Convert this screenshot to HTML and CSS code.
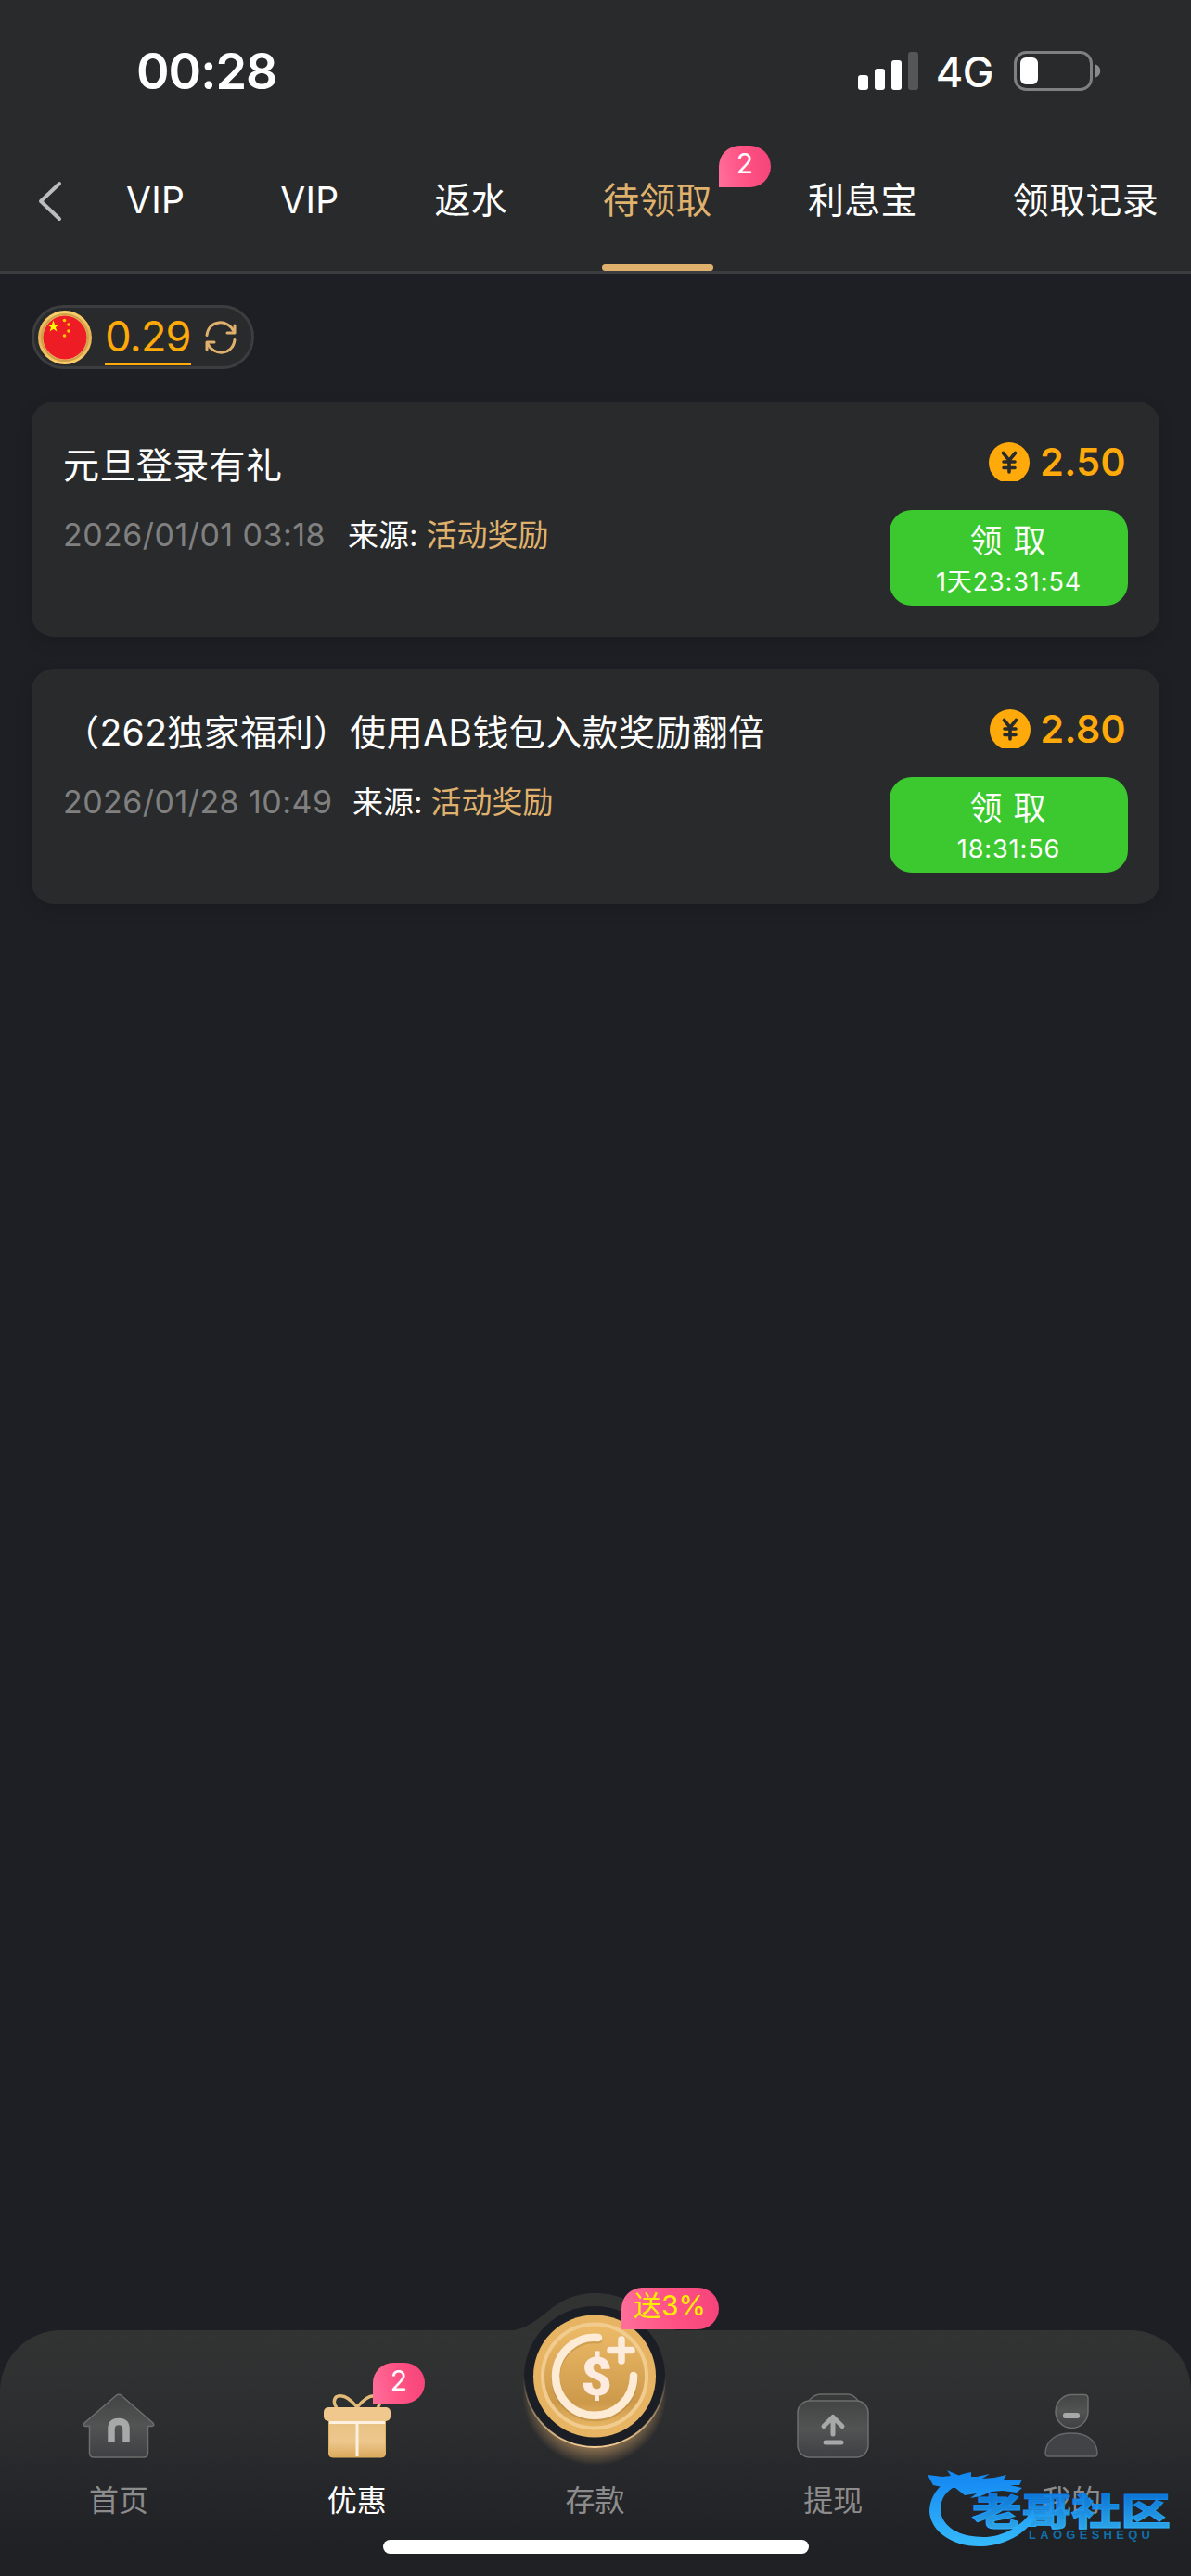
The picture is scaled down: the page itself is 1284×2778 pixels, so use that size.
FILE: index.html
```html
<!DOCTYPE html>
<html lang="zh-CN">
<head>
    <meta charset="UTF-8">
    <meta name="viewport" content="width=device-width, initial-scale=1.0">
    <title>待领取</title>
    <link rel="stylesheet" href="styles.css">
</head>
<body>
    <div class="app">
        <header class="header">
            <div class="status-bar">
                <span class="time">00:28</span>
                <div class="status-icons">
                    <svg class="signal" width="65" height="42" viewBox="0 0 65 42">
                        <rect x="0" y="25" width="11" height="16" rx="3" fill="#fff"/>
                        <rect x="18" y="18" width="11" height="23" rx="3" fill="#fff"/>
                        <rect x="36" y="9" width="11" height="32" rx="3" fill="#fff"/>
                        <rect x="54" y="0" width="11" height="41" rx="3" fill="#565658"/>
                    </svg>
                    <span class="network">4G</span>
                    <svg class="battery" width="95" height="43" viewBox="0 0 95 43">
                        <rect x="1.5" y="1.5" width="82" height="40" rx="12" fill="none" stroke="#7f8081" stroke-width="3"/>
                        <rect x="7" y="7" width="19" height="29" rx="6" fill="#fff"/>
                        <path d="M88 14.500c7 2 7 12 0 14z" fill="#8b8b8c"/>
                    </svg>
                </div>
            </div>
            <nav class="tabs">
                <svg class="back" width="28" height="44" viewBox="0 0 28 44">
                    <path d="M24 3L4 22l20 19" fill="none" stroke="#bdbdbd" stroke-width="4" stroke-linecap="round" stroke-linejoin="round"/>
                </svg>
                <a class="tab">VIP</a>
                <a class="tab">VIP</a>
                <a class="tab">返水</a>
                <a class="tab active">待领取<span class="badge">2</span></a>
                <a class="tab">利息宝</a>
                <a class="tab">领取记录</a>
            </nav>
        </header>

        <main class="content">
            <div class="balance">
                <svg class="flag" width="60" height="60" viewBox="0 0 60 60">
                    <defs>
                        <linearGradient id="ring" x1="0" y1="0" x2="0" y2="1">
                            <stop offset="0" stop-color="#ffd36b"/>
                            <stop offset=".45" stop-color="#e3b055"/>
                            <stop offset="1" stop-color="#ffcf68"/>
                        </linearGradient>
                    </defs>
                    <circle cx="30" cy="30" r="29" fill="url(#ring)"/>
                    <circle cx="30" cy="30" r="25" fill="none" stroke="#cfa04c" stroke-width="2"/>
                    <circle cx="30" cy="30" r="23.500" fill="#ee1c25"/>
                    <path d="M17.500 11.500l1.500 4.600h4.800l-3.900 2.900 1.500 4.600-3.900-2.800-3.900 2.800 1.500-4.600-3.900-2.900h4.800z" fill="#ff0"/>
                    <circle cx="29.500" cy="11.500" r="1.800" fill="#fc0"/>
                    <circle cx="34" cy="16" r="1.800" fill="#fc0"/>
                    <circle cx="34" cy="23" r="1.800" fill="#fc0"/>
                    <circle cx="29.500" cy="28" r="1.800" fill="#fc0"/>
                </svg>
                <span class="balance-num">0.29</span>
                <svg class="refresh" width="36" height="36" viewBox="0 0 36 36" fill="none" stroke="#dfb16d" stroke-width="3" stroke-linecap="round" stroke-linejoin="round">
                    <path d="M3 15.500C5 -1.500 26 -2.500 32.500 12"/>
                    <path d="M33 5v8h-8"/>
                    <path d="M33 20.500C31 37.500 10 38.500 3.500 24"/>
                    <path d="M3 31v-8h8"/>
                </svg>
            </div>

            <section class="card">
                <div class="info">
                    <h2 class="title">元旦登录有礼</h2>
                    <p class="meta"><span class="date">2026/01/01 03:18</span><span class="source">来源:</span><em>活动奖励</em></p>
                </div>
                <div class="side">
                    <div class="amount">
                        <svg class="coin" width="44" height="42" viewBox="0 0 44 42">
                            <circle cx="22" cy="22" r="22" fill="#ffa90a"/>
                            <path d="M15.500 11.500l6.500 8 6.500-8M22 20v12M16 21h12M16 27.500h12" fill="none" stroke="#292a2b" stroke-width="3.600" stroke-linecap="round"/>
                        </svg>
                        <span>2.50</span>
                    </div>
                    <button class="claim"><span class="claim-text">领取</span><span class="timer">1天23:31:54</span></button>
                </div>
            </section>

            <section class="card">
                <div class="info">
                    <h2 class="title">（262独家福利）使用AB钱包入款奖励翻倍</h2>
                    <p class="meta"><span class="date later">2026/01/28 10:49</span><span class="source">来源:</span><em>活动奖励</em></p>
                </div>
                <div class="side">
                    <div class="amount">
                        <svg class="coin" width="44" height="42" viewBox="0 0 44 42">
                            <circle cx="22" cy="22" r="22" fill="#ffa90a"/>
                            <path d="M15.500 11.500l6.500 8 6.500-8M22 20v12M16 21h12M16 27.500h12" fill="none" stroke="#292a2b" stroke-width="3.600" stroke-linecap="round"/>
                        </svg>
                        <span>2.80</span>
                    </div>
                    <button class="claim"><span class="claim-text">领取</span><span class="timer">18:31:56</span></button>
                </div>
            </section>
        </main>

        <footer class="tabbar">
            <svg class="hump" width="200" height="42" viewBox="0 0 200 42">
                <path d="M0 42C45 42 48 1 100 1C152 1 155 42 200 42z" fill="#313232"/>
            </svg>
            <a class="item">
                <svg class="icon" width="80" height="72" viewBox="0 0 80 72">
                    <defs>
                        <linearGradient id="gray" x1="0" y1="0" x2="0" y2="1">
                            <stop offset="0" stop-color="#434444"/>
                            <stop offset=".5" stop-color="#525353"/>
                            <stop offset="1" stop-color="#3f4043"/>
                        </linearGradient>
                    </defs>
                    <path d="M37 3.500q3-2.500 6 0L77 33q2 3-1 3.500h-4.500V65q0 5-5 5h-53q-5 0-5-5V36.500H4Q1 36 3 33z" fill="url(#gray)" stroke="#6c6d6e" stroke-width="1.500"/>
                    <path d="M32 53V39.500q0-8 8-8t8 8V53" fill="none" stroke="#a7a8a8" stroke-width="7.500"/>
                </svg>
                <span class="label">首页</span>
            </a>
            <a class="item on">
                <svg class="icon" width="80" height="72" viewBox="0 0 80 72">
                    <defs>
                        <linearGradient id="gift" x1="0" y1="0" x2="0" y2="1">
                            <stop offset="0" stop-color="#e6bf82"/>
                            <stop offset=".6" stop-color="#edc78c"/>
                            <stop offset="1" stop-color="#dba95d"/>
                        </linearGradient>
                    </defs>
                    <path d="M40 16C32 6 24 2 18 4.500c-4 3-3 9 0 12M40 16C48 6 56 2 62 4.500c4 3 3 9 0 12" fill="none" stroke="#e3bb78" stroke-width="3.500"/>
                    <rect x="9.500" y="28" width="61" height="42" rx="4" fill="url(#gift)" stroke="#dcb060"/>
                    <rect x="4" y="16" width="72" height="15" rx="5" fill="#f0c88e"/>
                    <path d="M10 32.500h60M40 32v37" stroke="#fff1e2" stroke-width="3"/>
                </svg>
                <span class="label">优惠</span>
                <span class="badge">2</span>
            </a>
            <a class="item">
                <svg class="deposit" width="200" height="200" viewBox="0 0 200 200">
                    <defs>
                        <linearGradient id="gold" x1="0" y1="0" x2="0" y2="1">
                            <stop offset="0" stop-color="#edbb68"/>
                            <stop offset=".75" stop-color="#cd9a4c"/>
                            <stop offset="1" stop-color="#e8b764"/>
                        </linearGradient>
                        <linearGradient id="rim" x1="0" y1="0" x2="0" y2="1">
                            <stop offset=".5" stop-color="#eac48a" stop-opacity="0"/>
                            <stop offset="1" stop-color="#f3cd93"/>
                        </linearGradient>
                        <radialGradient id="glow" cx=".5" cy=".5" r=".5">
                            <stop offset=".7" stop-color="#d8a76a" stop-opacity=".65"/>
                            <stop offset="1" stop-color="#d8a76a" stop-opacity="0"/>
                        </radialGradient>
                    </defs>
                    <ellipse cx="100" cy="118" rx="78" ry="78" fill="url(#glow)"/>
                    <circle cx="100" cy="100" r="76" fill="#1b1e24" stroke="url(#rim)" stroke-width="2"/>
                    <circle cx="100" cy="99.500" r="66" fill="#e7b463"/>
                    <circle cx="100" cy="99.500" r="56" fill="url(#gold)" stroke="#f2cb8e" stroke-width="4"/>
                    <path d="M104 58A42 42 0 1 0 142 99" fill="none" stroke="#a97832" stroke-opacity=".35" stroke-width="9" stroke-linecap="round" transform="translate(0 2)"/>
                    <path d="M104 58A42 42 0 1 0 142 99" fill="none" stroke="#fdebd6" stroke-width="8.500" stroke-linecap="round"/>
                    <path d="M129 60v23M117 71.500h23" stroke="#fbecdc" stroke-width="7.500" stroke-linecap="round"/>
                    <text class="dollar" x="102" y="120" text-anchor="middle">$</text>
                </svg>
                <span class="label">存款</span>
                <span class="badge promo">送3%</span>
            </a>
            <a class="item">
                <svg class="icon" width="80" height="72" viewBox="0 0 80 72">
                    <path d="M14 9q6-7 12-7h30q6 0 12 8" fill="#383939" stroke="#686969" stroke-width="1.500"/>
                    <rect x="2" y="9" width="76" height="61" rx="13" fill="url(#gray)" stroke="#6c6f6f" stroke-width="1.500"/>
                    <path d="M40 45V27M30 36.500l10-10 10 10" fill="none" stroke="#a7a8a8" stroke-width="5" stroke-linecap="round" stroke-linejoin="round"/>
                    <path d="M32 54h17" stroke="#a7a8a8" stroke-width="5" stroke-linecap="round"/>
                </svg>
                <span class="label">提现</span>
            </a>
            <a class="item">
                <svg class="icon" width="80" height="72" viewBox="0 0 80 72">
                    <path d="M41 2.500h13q4 0 4 4v14a17.500 18 0 1 1-17-18z" fill="url(#gray)" stroke="#6c6d6e" stroke-width="1.500"/>
                    <path d="M12 65c1-14 12-21 28-21s27 7 28 21q0 4-3 4H15q-3 0-3-4z" fill="#424346" stroke="#66676a" stroke-width="1.500"/>
                    <rect x="31" y="22" width="18" height="6" rx="2.500" fill="#a7a8a8"/>
                </svg>
                <span class="label">我的</span>
            </a>
            <div class="home-indicator"></div>
        </footer>

        <svg class="watermark" width="280" height="110" viewBox="0 0 280 110">
            <defs>
                <linearGradient id="blue" gradientUnits="userSpaceOnUse" x1="0" y1="10" x2="0" y2="104">
                    <stop offset="0" stop-color="#0a7cf0"/>
                    <stop offset="1" stop-color="#35b8fa"/>
                </linearGradient>
                <linearGradient id="blueText" gradientUnits="userSpaceOnUse" x1="0" y1="50" x2="0" y2="86">
                    <stop offset="0" stop-color="#0a7ee8"/>
                    <stop offset="1" stop-color="#2eb2fb"/>
                </linearGradient>
            </defs>
            <path d="M47 26C15 32 2 50 2 69c2 22 26 38 57 37 25-1 45-13 57-30l-2-10c-14 20-34 30-54 30-26 0-44-11-46-28C13 51 26 38 47 38z" fill="url(#blue)"/>
            <path d="M0 29l16 2 9-1-4-6 16 7 16 0 14-3-8 5 13-1 13-3-3 5 20 0-3 6-10 0 13 3-6 5-15-2-12 1-12 5-11 2 7-5-13 2-10-8-10 0-14-3z" fill="url(#blue)"/>
            <text class="wm-cn" x="48" y="83" textLength="214" lengthAdjust="spacingAndGlyphs">老哥社区</text>
            <text class="wm-en" x="109" y="98" textLength="131">LAOGESHEQU</text>
        </svg>
    </div>
</body>
</html>
```

FILE: styles.css
```css
* {
    box-sizing: border-box;
}
body {
    margin: 0;
    background-color: #1e1f24;
    color: #fff;
    font-family: Inter, "Noto Sans CJK SC", sans-serif;
    font-size: 39px;
}
.app {
    position: relative;
    width: 1284px;
    height: 2778px;
    display: flex;
    flex-direction: column;
    overflow: hidden;
}
svg {
    display: block;
    flex: none;
}
.header {
    height: 295px;
    background-color: #292a2b;
    border-bottom: 3px solid #3c3d3e;
}
.status-bar {
    height: 141px;
    padding: 12px 96px 0 147px;
    display: flex;
    align-items: center;
    justify-content: space-between;
}
.time {
    font-size: 54px;
    font-weight: 600;
    letter-spacing: -1px;
}
.status-icons {
    display: flex;
    align-items: center;
}
.network {
    margin: 2px 22px 0 19px;
    font-size: 45px;
    font-weight: 500;
    letter-spacing: -0.5px;
}
.tabs {
    height: 151px;
    padding-left: 40px;
    display: flex;
    align-items: center;
}
.back {
    margin-right: 68px;
}
.tab {
    position: relative;
    height: 151px;
    line-height: 150px;
    margin-right: 103px;
    white-space: nowrap;
    letter-spacing: 0.3px;
}
.tab.active {
    color: #dfb16d;
}
.tab.active::after {
    content: "";
    position: absolute;
    left: -1px;
    right: -1px;
    bottom: 0;
    height: 7px;
    border-radius: 4px;
    background-color: #dfb16d;
}
.badge {
    position: absolute;
    width: 56px;
    height: 45px;
    border-radius: 24px 24px 24px 0;
    background: linear-gradient(80deg, #ff6f9a, #ff5284 50%, #f4437a);
    color: #fff;
    font-size: 30px;
    line-height: 39px;
    text-align: center;
    letter-spacing: 0;
}
.tab .badge {
    left: 125px;
    top: 16px;
}
.content {
    flex: 1;
    padding: 34px;
}
.balance {
    width: 240px;
    height: 69px;
    margin-bottom: 35px;
    padding-left: 3px;
    display: flex;
    align-items: center;
    border: 3px solid #3c3d3e;
    border-radius: 35px;
    background-color: #292a2b;
}
.balance-num {
    width: 93px;
    height: 60px;
    margin: 1px 14px 0 13px;
    line-height: 58px;
    font-size: 45px;
    letter-spacing: -0.8px;
    text-align: center;
    color: #ffa90a;
    border-bottom: 3px solid #ffa90a;
}
.card {
    height: 254px;
    margin-bottom: 34px;
    padding: 34px;
    display: flex;
    justify-content: space-between;
    border-radius: 24px;
    background-color: #292a2b;
    box-shadow: 0 6px 18px rgba(0, 0, 0, 0.12);
}
.title {
    height: 70px;
    margin: 0;
    line-height: 69px;
    font-size: 39px;
    font-weight: 400;
    letter-spacing: 0.4px;
    white-space: nowrap;
}
.meta {
    margin: 0;
    display: flex;
    line-height: 80px;
    font-size: 33px;
    white-space: nowrap;
}
.date {
    width: 307px;
    font-size: 34px;
    letter-spacing: 0.45px;
    color: #808080;
}
.date.later {
    width: 312px;
}
.source {
    margin-right: 9px;
}
.meta em {
    font-style: normal;
    color: #dfb16d;
}
.side {
    width: 257px;
    display: flex;
    flex-direction: column;
    align-items: flex-end;
}
.amount {
    height: 83px;
    padding: 10px 2px 0 0;
    display: flex;
    align-items: flex-start;
    gap: 11px;
    font-size: 41px;
    font-weight: 600;
    letter-spacing: 0.4px;
    line-height: 43px;
    color: #ffa90a;
}
.claim {
    width: 257px;
    height: 103px;
    padding: 0;
    display: flex;
    flex-direction: column;
    align-items: center;
    border: none;
    border-radius: 24px;
    background-color: #3cc92f;
    color: #fff;
    font-family: inherit;
}
.claim-text {
    height: 52px;
    line-height: 67px;
    padding-left: 10px;
    font-size: 35px;
    letter-spacing: 12px;
}
.timer {
    line-height: 51px;
    font-size: 27px;
    letter-spacing: 0.9px;
}
.tabbar {
    position: relative;
    height: 265px;
    display: flex;
    border-radius: 66px 66px 0 0;
    background: linear-gradient(#323333, #2c2d2e 40%, #27282b 58%, #202124 88%);
}
.hump {
    position: absolute;
    left: 542px;
    top: -41px;
}
.item {
    position: relative;
    flex: 1;
    padding: 67px 1px 0 0;
    display: flex;
    flex-direction: column;
    align-items: center;
    color: #8c8c8d;
}
.item.on {
    color: #fff;
}
.label {
    margin-top: 21px;
    line-height: 48px;
    font-size: 32px;
}
.deposit {
    margin: -117px 0 -11px;
}
.item .badge {
    left: 145px;
    top: 35px;
    height: 44px;
}
.item .badge.promo {
    left: 156px;
    top: -46px;
    width: 105px;
    height: 45px;
    color: #ffed00;
    line-height: 39px;
}
.dollar {
    font-family: Roboto, sans-serif;
    font-size: 58px;
    font-weight: 900;
    fill: #fdebe0;
}
.home-indicator {
    position: absolute;
    left: 413px;
    bottom: 24px;
    width: 459px;
    height: 15px;
    border-radius: 8px;
    background-color: #fff;
}
.watermark {
    position: absolute;
    left: 1000px;
    top: 2640px;
}
.wm-cn {
    font-family: "Noto Sans CJK SC", sans-serif;
    font-size: 40px;
    font-weight: 900;
    fill: url(#blueText);
    stroke: url(#blueText);
    stroke-width: 1px;
    fill-opacity: 0.9;
}
.wm-en {
    font-family: "Liberation Sans", sans-serif;
    font-size: 13px;
    font-weight: bold;
    fill: #0f6fa8;
}
```
